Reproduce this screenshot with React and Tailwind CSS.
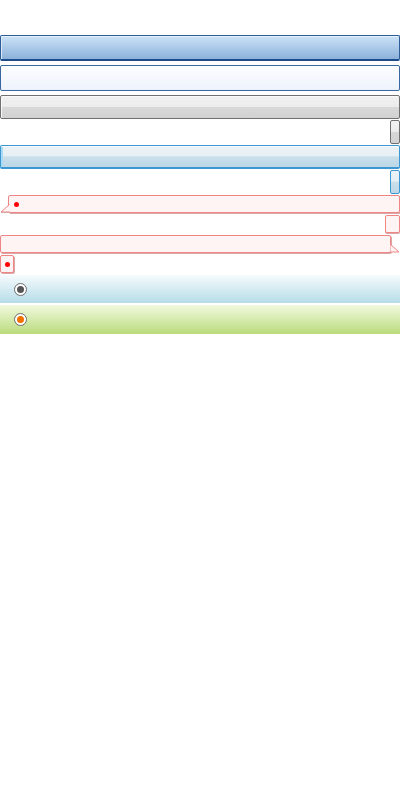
import React from 'react';

// Bare widget-theme swatches: bars, tabs, error tips and radio panels, no labels.
const Dot = () => <span className="block w-[5px] h-[5px] rounded-full bg-[#ff0000]" />;

const Radio = ({ dot }) => (
  <span className="flex items-center justify-center w-[13px] h-[13px] rounded-full border border-[#6b6b6b] bg-white">
    <span className={`block w-[7px] h-[7px] rounded-full ${dot}`} />
  </span>
);

const App = () => {
  return (
    <div className="w-[400px] min-h-[800px] bg-white flex flex-col pt-[35px]">
      {/* header bar */}
      <div className="h-[26px] rounded-[2px] border border-[#2d5c99] border-b-2 border-b-[#1c4b8b] bg-gradient-to-b from-[#cde3f7] to-[#8cb1da] shadow-[inset_0_1px_0_#e6f1fb,inset_1px_0_0_#dbeaf8]" />

      {/* field */}
      <div className="mt-[4px] h-[26px] rounded-[2px] border border-[#3a67a2] bg-gradient-to-b from-[#fdfeff] to-[#edf3fc]" />

      {/* gray button */}
      <div className="mt-[4px] h-[24px] rounded-[2px] border border-[#707070] bg-[linear-gradient(#f1f1f1_0%,#ececec_48%,#d8d8d8_52%,#d2d2d2_100%)] shadow-[inset_0_1px_0_#fafafa,inset_1px_0_0_#fafafa]" />

      <div className="mt-[1px] h-[24px] w-[10px] self-end rounded-[2px] border border-[#707070] bg-[linear-gradient(#f1f1f1_0%,#ececec_48%,#d8d8d8_52%,#d2d2d2_100%)]" />

      {/* light blue button */}
      <div className="mt-[1px] h-[24px] rounded-[2px] border border-[#3c98d3] border-b-2 bg-[linear-gradient(#ecf3f7_0%,#e6eff4_46%,#c9dfeb_52%,#bcd7e7_100%)] shadow-[inset_0_1px_0_#f7fbfd,inset_2px_0_0_#a9dcf4]" />

      <div className="mt-[1px] h-[24px] w-[10px] self-end rounded-[2px] border border-[#3c98d3] bg-[linear-gradient(#ecf3f7_0%,#e6eff4_46%,#c9dfeb_52%,#bcd7e7_100%)]" />

      {/* error tip, arrow left */}
      <div className="relative mt-[1px] h-[18px] ml-[8px]">
        <div className="h-full rounded-[2px] border border-[#f08585] bg-[#fff4f4] shadow-[1px_1px_0_#d8a8a8] flex items-center pl-[5px]">
          <Dot />
        </div>
        <svg className="absolute left-[-8px] top-[9px]" width="10" height="9" viewBox="0 0 10 9">
          <path d="M9.5 0.5 L1 8 L9.5 8" fill="#fff4f4" stroke="#f08585" strokeWidth="1" />
          <path d="M1 8.5 L9.5 8.5" stroke="#d8a8a8" strokeWidth="1" />
        </svg>
      </div>

      <div className="mt-[2px] h-[18px] w-[15px] self-end rounded-[2px] border border-[#f08585] bg-[#fff4f4] shadow-[0_1px_0_#d8a8a8]" />

      {/* error tip, arrow right */}
      <div className="relative mt-[2px] h-[18px] w-[391px]">
        <div className="h-full rounded-[2px] border border-[#f08585] bg-[#fff4f4] shadow-[1px_1px_0_#d8a8a8]" />
        <svg className="absolute right-[-9px] top-[9px]" width="10" height="9" viewBox="0 0 10 9">
          <path d="M0.5 0.5 L9 8 L0.5 8" fill="#fff4f4" stroke="#f08585" strokeWidth="1" />
        </svg>
      </div>

      <div className="mt-[2px] h-[18px] w-[14px] rounded-[2px] border border-[#f08585] bg-[#fff4f4] shadow-[1px_1px_0_#d8a8a8] flex items-center pl-[4px]">
        <Dot />
      </div>

      {/* radio panels */}
      <div className="mt-[2px] h-[28px] flex items-center pl-[14px] bg-gradient-to-b from-[#f6fbfd] to-[#b6dce8]">
        <Radio dot="bg-[#555555]" />
      </div>
      <div className="mt-[2px] h-[29px] flex items-center pl-[14px] bg-gradient-to-b from-[#f2f9df] to-[#badb7a]">
        <Radio dot="bg-[#f07000]" />
      </div>
    </div>
  );
};

export default App;
